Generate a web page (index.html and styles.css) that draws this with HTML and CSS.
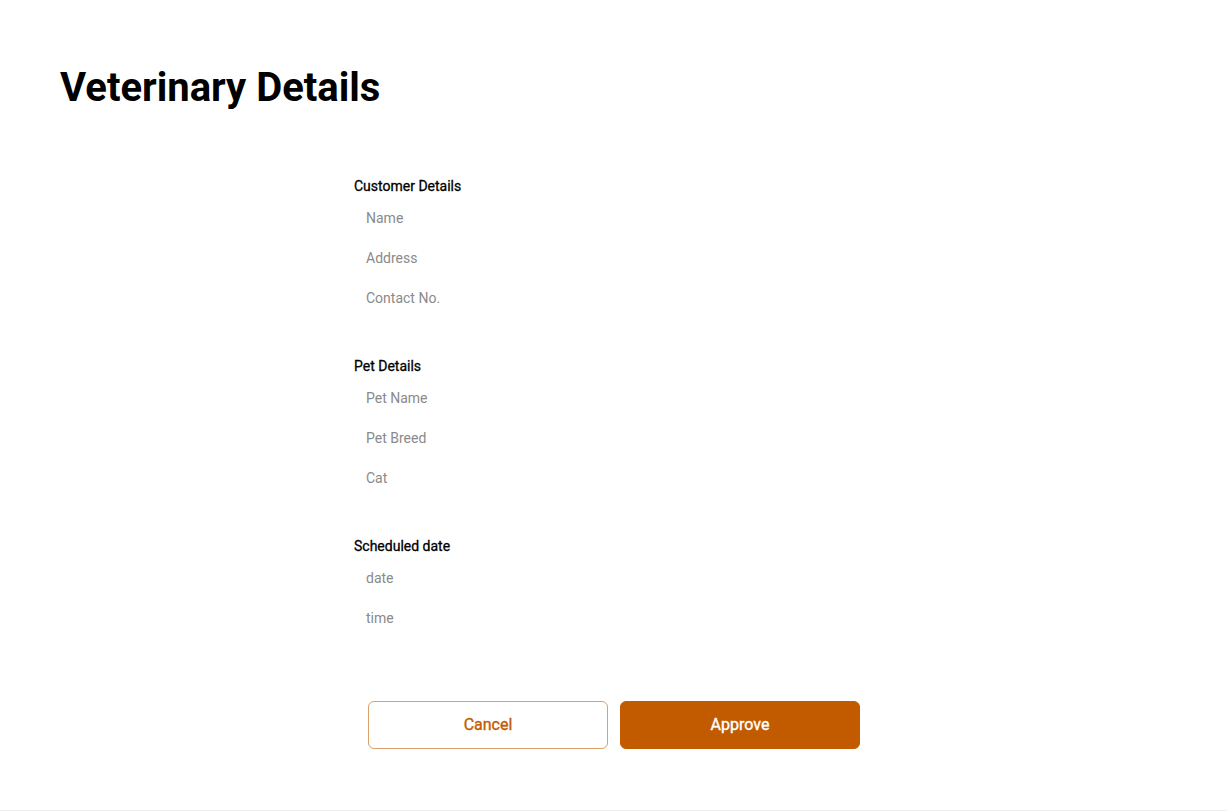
FILE: index.html
```html
<!DOCTYPE html>
<html lang="en">
<head>
<meta charset="utf-8">
<title>Veterinary Details</title>
<link rel="stylesheet" href="styles.css">
</head>
<body>
<div class="page">
  <h1 class="title">Veterinary Details</h1>
  <div class="form">
    <section class="section">
      <h2 class="section-title">Customer Details</h2>
      <div class="field">Name</div>
      <div class="field">Address</div>
      <div class="field">Contact No.</div>
    </section>
    <section class="section">
      <h2 class="section-title">Pet Details</h2>
      <div class="field">Pet Name</div>
      <div class="field">Pet Breed</div>
      <div class="field">Cat</div>
    </section>
    <section class="section">
      <h2 class="section-title">Scheduled date</h2>
      <div class="field">date</div>
      <div class="field">time</div>
    </section>
    <div class="actions">
      <button class="btn btn-outline">Cancel</button>
      <button class="btn btn-primary">Approve</button>
    </div>
  </div>
</div>
</body>
</html>
```

FILE: styles.css
```css
* { box-sizing: border-box; }
html, body { margin: 0; padding: 0; background: #fff; }
body {
  font-family: Roboto, "Liberation Sans", Arial, sans-serif;
  color: #000;
}
.page {
  height: 811px;
  border-bottom: 1px solid #eeeeee;
  padding: 64px 0 0 60px;
}
.title {
  margin: 0;
  font-size: 40px;
  font-weight: 700;
  line-height: 47px;
}
.form {
  margin: 65px 0 0 294px;
  width: 506px;
}
.section {
  margin-bottom: 38px;
}
.section-title {
  margin: 0 0 2px 0;
  font-size: 14px;
  font-weight: 400;
  -webkit-text-stroke: 0.3px currentColor;
  line-height: 20px;
}
.field {
  height: 40px;
  line-height: 40px;
  padding-left: 12px;
  font-size: 14px;
  color: #8a8a8a;
}
.actions {
  display: flex;
  gap: 12px;
  margin-top: 63px;
  padding-left: 14px;
}
.btn {
  width: 240px;
  height: 48px;
  padding: 0 0 2px 0;
  border-radius: 6px;
  font-family: inherit;
  font-size: 16px;
  font-weight: 400;
  -webkit-text-stroke: 0.35px currentColor;
  cursor: pointer;
}
.btn-outline {
  background: #fff;
  border: 1px solid #dba06a;
  color: #c25b00;
}
.btn-primary {
  background: #c25b00;
  border: 1px solid #c25b00;
  color: #fff;
}
```
